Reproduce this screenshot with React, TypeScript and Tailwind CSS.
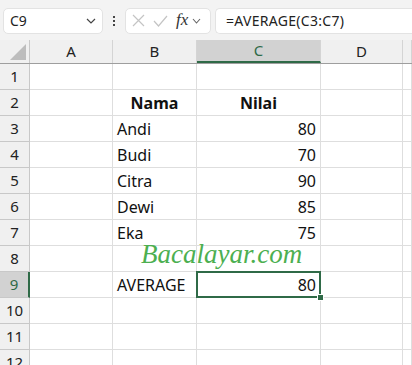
import React from "react";

const cols = ["A", "B", "C", "D", ""];
const colW = ["w-[83px]", "w-[84px]", "w-[124px]", "w-[82px]", "w-[9px]"];

type Cell = { t: string; bold?: boolean; right?: boolean; center?: boolean };
const data: Record<number, Record<number, Cell>> = {
  2: { 1: { t: "Nama", bold: true, center: true }, 2: { t: "Nilai", bold: true, center: true } },
  3: { 1: { t: "Andi" }, 2: { t: "80", right: true } },
  4: { 1: { t: "Budi" }, 2: { t: "70", right: true } },
  5: { 1: { t: "Citra" }, 2: { t: "90", right: true } },
  6: { 1: { t: "Dewi" }, 2: { t: "85", right: true } },
  7: { 1: { t: "Eka" }, 2: { t: "75", right: true } },
  9: { 1: { t: "AVERAGE" }, 2: { t: "80", right: true } },
};

export default function App() {
  const rows = Array.from({ length: 12 }, (_, i) => i + 1);
  return (
    <div className="w-[412px] h-[365px] overflow-hidden bg-white relative" style={{ fontFamily: "'Noto Sans', 'Open Sans', sans-serif" }}>
      {/* toolbar */}
      <div className="h-[40px] bg-[#f3f3f3] flex items-center pl-[3px] pt-[1px]">
        <div className="w-[100px] h-[26px] bg-white border border-[#e3e3e3] rounded-[5px] flex items-center justify-between pl-[6px] pr-[6px]">
          <span className="text-[14px] text-[#222] leading-none">C9</span>
          <svg width="10" height="6" viewBox="0 0 10 6"><path d="M1 1 L5 5 L9 1" fill="none" stroke="#444" strokeWidth="1.2" /></svg>
        </div>
        <div className="w-[22px] flex flex-col items-center gap-[2px]">
          <div className="w-[2px] h-[2px] bg-[#444]" />
          <div className="w-[2px] h-[2px] bg-[#444]" />
          <div className="w-[2px] h-[2px] bg-[#444]" />
        </div>
        <div className="w-[86px] h-[26px] bg-white border border-[#e3e3e3] rounded-[5px] flex items-center pl-[6px] gap-[8px]">
          <svg width="13" height="13" viewBox="0 0 13 13"><path d="M1 1 L12 12 M12 1 L1 12" stroke="#c4c4c4" strokeWidth="1.2" /></svg>
          <svg width="15" height="12" viewBox="0 0 15 12"><path d="M1 6 L5.5 11 L14 1" fill="none" stroke="#c4c4c4" strokeWidth="1.2" /></svg>
          <span className="text-[17px] italic text-[#333] leading-none -mt-[2px]" style={{ fontFamily: "'Liberation Serif', serif" }}>fx</span>
          <svg width="9" height="6" viewBox="0 0 9 6" className="-ml-[4px]"><path d="M1 1 L4.5 5 L8 1" fill="none" stroke="#666" strokeWidth="1.1" /></svg>
        </div>
        <div className="ml-[4px] flex-1 h-[26px] bg-white border border-[#e3e3e3] rounded-l-[5px] border-r-0 flex items-center pl-[10px]">
          <span className="text-[14px] text-[#222] leading-none tracking-[0.3px]">=AVERAGE(C3:C7)</span>
        </div>
      </div>

      {/* column headers */}
      <div className="flex h-[24px] bg-[#f0f0f0] border-b border-[#9e9e9e]">
        <div className="w-[30px] h-full border-r border-[#c8c8c8] relative">
          <svg width="16" height="16" viewBox="0 0 16 16" className="absolute right-[3px] bottom-[3px]"><path d="M16 0 L16 16 L0 16 Z" fill="#bdbdbd" /></svg>
        </div>
        {cols.map((c, i) => (
          <div
            key={i}
            className={`${colW[i]} h-full border-r border-[#d4d4d4] flex items-center justify-center text-[15px] leading-none ${
              c === "C" ? "bg-[#d2d2d2] text-[#2f6a47] border-b-2 border-b-[#2f6a47] -mb-[1px]" : "text-[#222]"
            }`}
          >
            {c}
          </div>
        ))}
      </div>

      {/* rows */}
      {rows.map((r) => (
        <div key={r} className="flex h-[26px]">
          <div
            className={`w-[30px] h-full border-b border-r flex items-center justify-center text-[15px] leading-none ${
              r === 9
                ? "bg-[#d2d2d2] text-[#2f6a47] border-b-[#c8c8c8] border-r-2 border-r-[#2f6a47]"
                : "bg-[#f0f0f0] text-[#222] border-[#c8c8c8]"
            }`}
          >
            {r}
          </div>
          {cols.map((_, ci) => {
            const cd = ci === 0 ? undefined : data[r]?.[ci];
            const sel = r === 9 && ci === 2;
            return (
              <div
                key={ci}
                className={`${colW[ci]} h-full border-b border-r border-[#dedede] relative flex items-center px-[4px] text-[16px] text-[#111] leading-none ${
                  cd?.right ? "justify-end" : cd?.center ? "justify-center" : "justify-start"
                } ${cd?.bold ? "font-bold" : ""} ${sel ? "z-10" : ""}`}
              >
                {cd ? <span>{cd.t}</span> : null}
                {sel && (
                  <>
                    <div className="absolute -left-[1px] -top-[1px] -right-[1px] -bottom-[1px] border-2 border-[#2f6a47]" />
                    <div className="absolute -right-[4px] -bottom-[4px] w-[7px] h-[7px] bg-[#2f6a47] border border-white" />
                  </>
                )}
              </div>
            );
          })}
        </div>
      ))}

      {/* watermark */}
      <div
        className="absolute left-[141px] top-[241px] text-[27px] italic text-[#4caf50] leading-none z-20"
        style={{ fontFamily: "'Liberation Serif', serif" }}
      >
        Bacalayar.com
      </div>
    </div>
  );
}
